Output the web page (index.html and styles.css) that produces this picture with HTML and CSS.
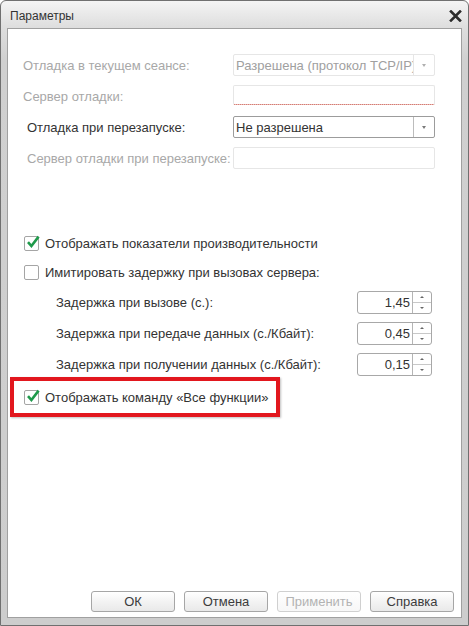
FILE: index.html
```html
<!DOCTYPE html>
<html lang="ru">
<head>
<meta charset="utf-8">
<title>Параметры</title>
<link rel="stylesheet" href="styles.css">
</head>
<body>
<div class="window">
  <div class="titlebar">
    <span class="title">Параметры</span>
    <svg class="close" width="13" height="12" viewBox="0 0 13 12"><path d="M2 1.5 L11 10.5 M11 1.5 L2 10.5" stroke="#2b2b2b" stroke-width="2.6" stroke-linecap="square"/></svg>
  </div>
  <div class="client">
    <div class="form">
      <div class="label dis">Отладка в текущем сеансе:</div>
      <div class="field dis combo"><span class="val">Разрешена (протокол TCP/IP)</span><span class="drop"><i class="tri"></i></span></div>

      <div class="label dis">Сервер отладки:</div>
      <div class="field dis req"></div>

      <div class="label ind">Отладка при перезапуске:</div>
      <div class="field act combo"><span class="val">Не разрешена</span><span class="drop"><i class="tri"></i></span></div>

      <div class="label dis ind">Сервер отладки при перезапуске:</div>
      <div class="field dis"></div>
    </div>

    <div class="checks">
      <label class="chk"><span class="box on"><svg width="16" height="16" viewBox="0 0 16 16"><path d="M3 8.2 L6.4 12 L13.6 2.6" fill="none" stroke="#1f9a4b" stroke-width="2.6"/></svg></span>Отображать показатели производительности</label>
      <label class="chk"><span class="box"></span>Имитировать задержку при вызовах сервера:</label>
    </div>

    <div class="spins">
      <div class="spinrow"><span>Задержка при вызове (с.):</span><div class="spin"><span class="num">1,45</span><span class="arrows"><i class="up"></i><i class="dn"></i></span></div></div>
      <div class="spinrow"><span>Задержка при передаче данных (с./Кбайт):</span><div class="spin"><span class="num">0,45</span><span class="arrows"><i class="up"></i><i class="dn"></i></span></div></div>
      <div class="spinrow"><span>Задержка при получении данных (с./Кбайт):</span><div class="spin"><span class="num">0,15</span><span class="arrows"><i class="up"></i><i class="dn"></i></span></div></div>
    </div>

    <div class="highlight">
      <label class="chk"><span class="box on"><svg width="16" height="16" viewBox="0 0 16 16"><path d="M3 8.2 L6.4 12 L13.6 2.6" fill="none" stroke="#1f9a4b" stroke-width="2.6"/></svg></span>Отображать команду «Все функции»</label>
    </div>

    <div class="buttons">
      <div class="btn">ОК</div>
      <div class="btn">Отмена</div>
      <div class="btn disabled">Применить</div>
      <div class="btn">Справка</div>
    </div>
  </div>
</div>
</body>
</html>
```

FILE: styles.css
```css
html, body {
  margin: 0;
  padding: 0;
  background: #ffffff;
}
body {
  width: 469px;
  height: 626px;
  font-family: "Liberation Sans", Arial, sans-serif;
  font-size: 13px;
  color: #333333;
}
.window {
  box-sizing: border-box;
  width: 469px;
  height: 626px;
  border: 1px solid #707070;
  border-radius: 6px 6px 0 0;
  background: linear-gradient(#f4f4f4 0px, #dedede 26px, #d0d0d0 60px, #cdcdcd 100%);
  padding: 0 6px 7px 6px;
  display: flex;
  flex-direction: column;
}
.titlebar {
  height: 27px;
  flex: none;
  display: flex;
  align-items: center;
  justify-content: space-between;
  padding: 0 0 0 3px;
}
.title {
  font-size: 12px;
  color: #333;
  margin-top: 2px;
}
.close {
  margin-top: 2px;
}
.client {
  flex: 1;
  background: #ffffff;
  border: 1px solid #a0a0a0;
  display: flex;
  flex-direction: column;
  padding-top: 25px;
}
.form {
  display: grid;
  grid-template-columns: 210px 202px;
  grid-auto-rows: 22px;
  row-gap: 9px;
  padding-left: 15px;
}
.label {
  display: flex;
  align-items: center;
  color: #333;
  white-space: nowrap;
}
.label.dis { color: #a8a8a8; }
.label.ind { padding-left: 4px; }
.field {
  box-sizing: border-box;
  border: 1px solid #e6e6e6;
  border-radius: 2px;
  display: flex;
  align-items: stretch;
  overflow: hidden;
}
.field.act { border-color: #9c9c9c; }
.field.req {
  height: 20px;
  border-bottom: 1px dotted #c0392b;
}
.val {
  flex: 1;
  min-width: 0;
  display: flex;
  align-items: center;
  padding-left: 2px;
  white-space: nowrap;
  overflow: hidden;
  color: #333;
}
.field.dis .val { color: #a0a0a0; }
.drop {
  width: 20px;
  flex: none;
  border-left: 1px solid #bcbcbc;
  display: flex;
  align-items: center;
  justify-content: center;
}
.field.dis .drop { border-left-color: #e6e6e6; }
.tri {
  width: 0;
  height: 0;
  border-left: 2.5px solid transparent;
  border-right: 2.5px solid transparent;
  border-top: 3px solid #7a7a7a;
}
.field.dis .tri { border-top-color: #b0b0b0; }
.checks {
  margin-top: 63px;
  display: flex;
  flex-direction: column;
  row-gap: 7px;
  padding-left: 16px;
}
.chk {
  display: flex;
  align-items: center;
  height: 22px;
  white-space: nowrap;
  color: #333;
}
.box {
  box-sizing: border-box;
  width: 15px;
  height: 15px;
  border: 1px solid #a5a5a5;
  border-radius: 2px;
  background: #fff;
  margin-right: 6px;
  display: flex;
  align-items: center;
  justify-content: center;
  flex: none;
  overflow: visible;
}
.box svg { margin-top: -3px; margin-left: 2px; flex: none; }
.spins {
  margin-top: 8px;
  display: flex;
  flex-direction: column;
  row-gap: 8px;
  padding-left: 48px;
  width: 376px;
}
.spinrow {
  display: flex;
  align-items: center;
  justify-content: space-between;
  height: 23px;
  white-space: nowrap;
}
.spin {
  box-sizing: border-box;
  width: 75px;
  height: 23px;
  border: 1px solid #a8a8a8;
  border-radius: 3px;
  display: flex;
}
.num {
  flex: 1;
  display: flex;
  align-items: center;
  justify-content: flex-end;
  padding-right: 2px;
  color: #333;
}
.arrows {
  width: 18px;
  border-left: 1px solid #b5b5b5;
  display: flex;
  flex-direction: column;
}
.arrows i {
  flex: 1;
  display: flex;
  align-items: center;
  justify-content: center;
}
.arrows i.up { border-bottom: 1px solid #c8c8c8; }
.arrows i.up::after {
  content: "";
  border-left: 2px solid transparent;
  border-right: 2px solid transparent;
  border-bottom: 2px solid #666;
}
.arrows i.dn::after {
  content: "";
  border-left: 2px solid transparent;
  border-right: 2px solid transparent;
  border-top: 2px solid #666;
}
.highlight {
  box-sizing: border-box;
  margin-top: 1px;
  margin-left: 2px;
  width: 270px;
  height: 40px;
  border: 4px solid #e2171e;
  box-shadow: 1px 1px 2px rgba(0,0,0,0.25);
  padding-left: 10px;
  display: flex;
  align-items: center;
}
.buttons {
  margin-top: auto;
  display: flex;
  justify-content: flex-end;
  column-gap: 9px;
  padding-right: 7px;
  padding-bottom: 5px;
}
.btn {
  box-sizing: border-box;
  width: 84px;
  height: 21px;
  border: 1px solid #a6a6a6;
  border-radius: 3px;
  background: linear-gradient(#ffffff, #f3f3f3 50%, #e9e9e9);
  font-size: 13px;
  color: #3c3c3c;
  display: flex;
  align-items: center;
  justify-content: center;
}
.btn.disabled {
  color: #b3b3b3;
  border-color: #d0d0d0;
  background: linear-gradient(#ffffff, #f7f7f7);
}
```
